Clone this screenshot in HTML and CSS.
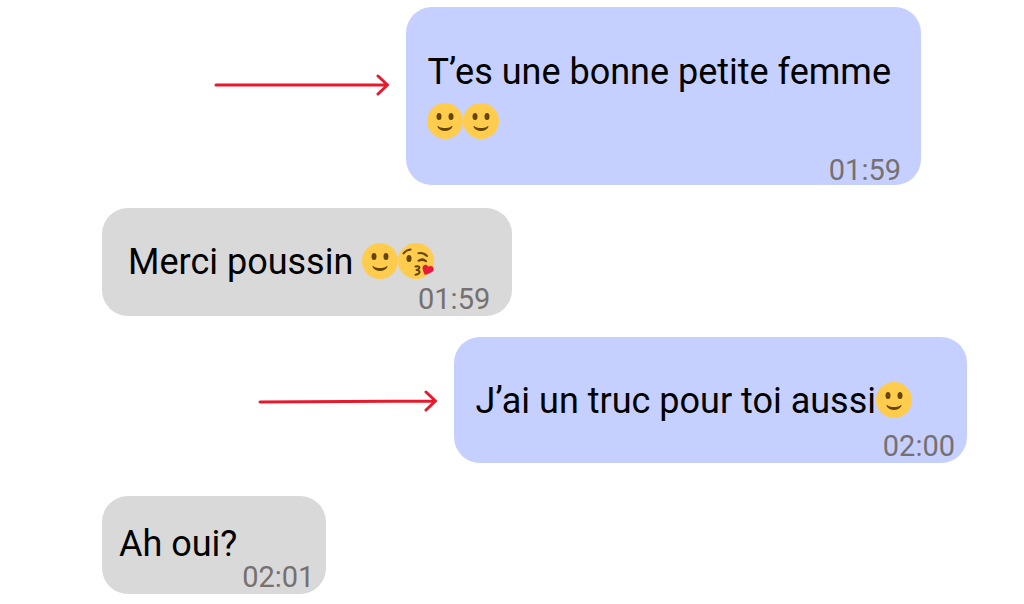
FILE: index.html
```html
<!DOCTYPE html>
<html lang="fr">
<head>
<meta charset="utf-8">
<meta name="viewport" content="width=device-width, initial-scale=1">
<title>Conversation</title>
<link rel="stylesheet" href="styles.css">
</head>
<body>
<svg class="sprite" aria-hidden="true">
  <symbol id="smile" viewBox="0 0 36 36">
    <circle fill="#ffcc4d" cx="18" cy="18" r="18"/>
    <path fill="#664500" d="M10.515 23.621C10.56 23.8 11.683 28 18 28c6.318 0 7.44-4.2 7.485-4.379.055-.217-.043-.442-.237-.554-.195-.111-.439-.078-.6.077C24.629 23.163 22.694 25 18 25s-6.63-1.837-6.648-1.855C11.256 23.05 11.128 23 11 23c-.084 0-.169.021-.246.064-.196.112-.294.339-.239.557z"/>
    <ellipse fill="#664500" cx="12" cy="13.5" rx="2.5" ry="3.5"/>
    <ellipse fill="#664500" cx="24" cy="13.5" rx="2.5" ry="3.5"/>
  </symbol>
  <symbol id="kiss" viewBox="0 0 36 36">
    <circle fill="#ffcc4d" cx="18" cy="18" r="18"/>
    <ellipse fill="#664500" cx="11" cy="15.5" rx="2.5" ry="3.5"/>
    <g fill="none" stroke="#664500" stroke-width="2" stroke-linecap="round" stroke-linejoin="round">
      <path d="M5.5 10.5Q8 7 12.500 6.500"/>
      <path d="M20.500 10.200Q25.500 9.500 29 13"/>
      <path d="M20.500 17.800Q24.500 14.800 28 18.200M20.500 17.800Q24.500 16 28 18.200"/>
      <path d="M17.500 23.500C20.500 22.700 22.200 24 21 25.500C20.300 26.600 18.600 27 18.600 27C21.500 27.300 22.300 28.900 21 30.300C19.800 31.500 18.500 31.700 17.500 31.700"/>
    </g>
    <path fill="#e8193c" d="M26.700 31.700C25.500 29 24.300 26.500 24.600 24.200C25 21.600 28.700 20.700 30.200 23.700C33 22 36 23.600 35.800 26.400C35.500 28.900 31 30.700 26.700 31.700z"/>
  </symbol>
</svg>
<main class="chat">
  <div class="row row-sent row-first">
    <svg class="arrow arrow-high" viewBox="0 0 176 22" aria-hidden="true"><path d="M2 11H173M164 2L173.500 11L164 20"/></svg>
    <article class="bubble sent long">
      <p class="text">T’es une bonne petite femme<br><svg class="emoji" role="img" aria-label="sourire"><use href="#smile"/></svg><svg class="emoji" role="img" aria-label="sourire"><use href="#smile"/></svg></p>
      <time class="time">01:59</time>
    </article>
  </div>
  <div class="row row-second">
    <article class="bubble received medium">
      <p class="text">Merci poussin <svg class="emoji" role="img" aria-label="sourire"><use href="#smile"/></svg><svg class="emoji" role="img" aria-label="bisou"><use href="#kiss"/></svg></p>
      <time class="time">01:59</time>
    </article>
  </div>
  <div class="row row-sent row-third">
    <svg class="arrow arrow-wide" viewBox="0 0 180 22" aria-hidden="true"><path d="M2 12L177 11M168 2L177.500 11L168 20"/></svg>
    <article class="bubble sent single">
      <p class="text">J’ai un truc pour toi aussi<svg class="emoji" role="img" aria-label="sourire"><use href="#smile"/></svg></p>
      <time class="time">02:00</time>
    </article>
  </div>
  <div class="row">
    <article class="bubble received short">
      <p class="text">Ah oui?</p>
      <time class="time">02:01</time>
    </article>
  </div>
</main>
</body>
</html>
```
FILE: styles.css
```css
* {
  box-sizing: border-box;
}

body {
  margin: 0;
  background: #fff;
  color: #000;
  font-family: Roboto, "Liberation Sans", sans-serif;
}

.sprite {
  position: absolute;
  width: 0;
  height: 0;
}

.chat {
  padding: 7px 57px 10px 102px;
}

.row {
  display: flex;
  align-items: center;
}

.row-sent {
  justify-content: flex-end;
  gap: 16px;
}

.row-first {
  padding-right: 46px;
  margin-bottom: 23px;
}

.row-second {
  margin-bottom: 21px;
}

.row-third {
  margin-bottom: 33px;
}

.bubble {
  display: flex;
  flex-direction: column;
  border-radius: 26px;
}

.sent {
  background: #c6d0ff;
}

.received {
  background: #d9d9d9;
}

.text {
  margin: 0;
  font-size: 36px;
  line-height: 40px;
  white-space: nowrap;
}

.time {
  align-self: flex-end;
  color: #767070;
  font-size: 29px;
  line-height: 26px;
}

.long {
  padding: 40px 20px 2px 21px;
  gap: 10px;
}

.long .text {
  padding-right: 10px;
  line-height: 50px;
}

.medium {
  padding: 34px 22px 4px 26px;
  gap: 4px;
}

.medium .text {
  padding-right: 56px;
}

.single {
  padding: 44px 12px 4px 22px;
  gap: 12px;
}

.single .text {
  padding-right: 43px;
}

.short {
  padding: 28px 12px 4px 17px;
}

.short .text {
  padding-right: 77px;
}

.emoji {
  width: 36px;
  height: 36px;
  vertical-align: -5px;
}

.arrow {
  width: 176px;
  height: 22px;
  fill: none;
  stroke: #e8192c;
  stroke-width: 3;
  stroke-linecap: round;
  stroke-linejoin: round;
}

.arrow-high {
  margin-bottom: 23px;
}

.arrow-wide {
  width: 180px;
  margin-top: 2px;
}
```
